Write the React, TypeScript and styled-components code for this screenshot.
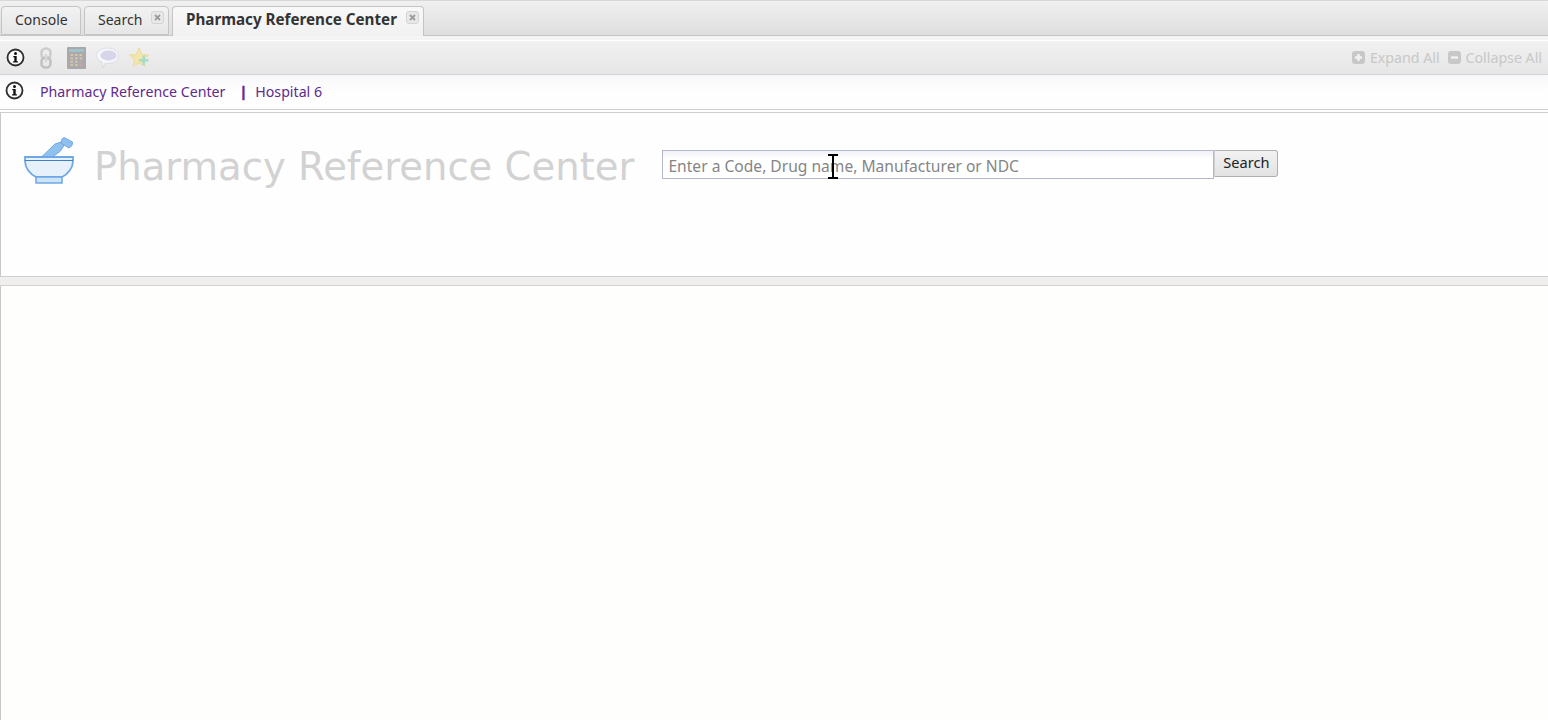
import styled, { createGlobalStyle } from "styled-components";

const GlobalStyle = createGlobalStyle`
  html, body {
    margin: 0;
    padding: 0;
    height: 100%;
    overflow: hidden;
    background: #fefefd;
    font-family: "Noto Sans", "DejaVu Sans", sans-serif;
  }
`;

const Page = styled.div`
  width: 1548px;
  height: 720px;
  display: flex;
  flex-direction: column;
  overflow: hidden;
`;

const TabStrip = styled.div`
  height: 36px;
  box-sizing: border-box;
  padding: 5px 0 0 1px;
  display: flex;
  align-items: flex-end;
  gap: 3px;
  background: linear-gradient(#f0f0f0, #dedede);
  border-top: 1px solid #d8d8d8;
  border-bottom: 1px solid #c6c6c6;
`;

const Tab = styled.div<{ $active?: boolean; $w: number }>`
  position: relative;
  width: ${(p) => p.$w}px;
  height: ${(p) => (p.$active ? 30 : 29)}px;
  box-sizing: border-box;
  padding-left: 13px;
  margin-bottom: ${(p) => (p.$active ? -1 : 0)}px;
  border: 1px solid #c4c4c4;
  border-bottom: ${(p) => (p.$active ? "none" : "1px solid #c4c4c4")};
  border-radius: 4px 4px 0 0;
  background: ${(p) => (p.$active ? "linear-gradient(#f8f8f8, #f1f1f1)" : "linear-gradient(#f2f2f2, #e6e6e6)")};
  color: #333;
  font-size: ${(p) => (p.$active ? 15.2 : 14)}px;
  font-weight: ${(p) => (p.$active ? 700 : 400)};
  line-height: 25px;
  white-space: nowrap;
`;

const TabClose = styled.span`
  position: absolute;
  top: 4px;
  right: 4px;
  width: 13px;
  height: 13px;
  box-sizing: border-box;
  border: 1px solid #d4d4d4;
  border-radius: 3px;
  background: #e8e8e8;
  display: flex;
  align-items: center;
  justify-content: center;
`;

const ToolGap = styled.div`
  height: 4px;
  background: #f4f4f4;
  border-bottom: 1px solid #fff;
`;

const Toolbar = styled.div`
  height: 34px;
  box-sizing: border-box;
  padding: 0 6px;
  display: flex;
  align-items: center;
  background: linear-gradient(#f1f1f1, #e6e6e6);
  border-bottom: 1px solid #d2d2d2;
`;

const ToolIcons = styled.div`
  display: flex;
  align-items: center;
  gap: 10px;
`;

const ExpandGroup = styled.div`
  margin-left: auto;
  display: flex;
  align-items: center;
  gap: 8px;
  color: #c8c8c8;
  font-size: 14.2px;
`;

const ExpandItem = styled.span`
  display: flex;
  align-items: center;
  gap: 5px;
`;

const SquareIcon = styled.span`
  width: 13px;
  height: 13px;
  border-radius: 3px;
  background: #c8c8c8;
  display: flex;
  align-items: center;
  justify-content: center;
`;

const InfoBar = styled.div`
  height: 35px;
  box-sizing: border-box;
  padding: 0 0 2px 5px;
  display: flex;
  align-items: center;
  background: linear-gradient(#f8f8fb, #fefefe 50%);
  border-bottom: 1px solid #cfcfcf;
  color: #5f2a8f;
  font-size: 14.2px;
`;

const InfoIconBox = styled.span`
  display: flex;
  margin-top: -2px;
`;

const Crumb = styled.span`
  margin-left: 16px;
`;

const CrumbSep = styled.span`
  margin-left: 14px;
  margin-right: 8px;
  font-weight: 700;
  -webkit-text-stroke: 0.6px #5f2a8f;
`;

const Gap = styled.div`
  height: 2px;
`;

const Panel = styled.section`
  height: 165px;
  box-sizing: border-box;
  padding: 23px 0 0 22px;
  display: flex;
  align-items: flex-start;
  border-top: 1px solid #cfcfcf;
  border-left: 1px solid #c8c8c8;
  border-bottom: 1px solid #cfcfcf;
  background: #fefefe;
`;

const Title = styled.h1`
  margin: 5px 0 0 19px;
  color: #d2d2d2;
  font-family: "DejaVu Sans", Verdana, sans-serif;
  font-size: 38.6px;
  font-weight: 400;
  line-height: 52px;
  white-space: nowrap;
`;

const SearchForm = styled.div`
  margin: 14px 0 0 28px;
  display: flex;
  align-items: flex-start;
`;

const SearchInput = styled.div`
  position: relative;
  width: 552px;
  height: 29px;
  box-sizing: border-box;
  padding-left: 5px;
  border: 1px solid #b4b8cc;
  background: linear-gradient(#f1f1f6, #fff 30%);
  color: #858585;
  font-size: 15.6px;
  line-height: 30px;
  white-space: nowrap;
`;

const SearchButton = styled.div`
  width: 64px;
  height: 27px;
  box-sizing: border-box;
  border: 1px solid #b0b0b0;
  border-left: 1px solid #cfcfcf;
  border-radius: 0 3px 3px 0;
  background: linear-gradient(#f2f2f2, #e2e2e2);
  color: #222;
  font-size: 14.6px;
  line-height: 22px;
  text-align: center;
`;

const Cursor = styled.svg`
  position: absolute;
  left: 164px;
  top: 3px;
`;

const Divider = styled.div`
  height: 8px;
  background: #f0efed;
  border-bottom: 1px solid #d2d2d2;
`;

const ResultPanel = styled.main`
  flex: 1;
  border-left: 1px solid #c8c8c8;
  background: #fefefd;
`;

function CloseIcon() {
  return (
    <TabClose>
      <svg width="7" height="7" viewBox="0 0 7 7">
        <path d="M1 1l5 5M6 1L1 6" stroke="#9c9c9c" strokeWidth="1.8" />
      </svg>
    </TabClose>
  );
}

function InfoIcon() {
  return (
    <svg width="19" height="19" viewBox="0 0 19 19">
      <circle cx="9.5" cy="9.5" r="8" fill="#fafafa" stroke="#2e2e2e" strokeWidth="1.8" />
      <circle cx="9.5" cy="5.6" r="1.5" fill="#111" />
      <path d="M7.3 8h3.4v5.2h1.2v1.3H7.1v-1.3h1.2V9.3h-1z" fill="#111" />
    </svg>
  );
}

function LinkIcon() {
  return (
    <svg width="22" height="22" viewBox="0 0 22 22" fill="none">
      <rect x="6.5" y="1.5" width="9" height="10" rx="4" stroke="#cdcdcd" strokeWidth="2.6" />
      <rect x="6.5" y="10.5" width="9" height="10" rx="4" stroke="#c2c2c2" strokeWidth="2.6" />
      <path d="M11 7v8" stroke="#d6d6d6" strokeWidth="2.4" />
    </svg>
  );
}

function CalculatorIcon() {
  const keys = [];
  for (let r = 0; r < 4; r++) {
    for (let c = 0; c < 3; c++) {
      keys.push(
        <rect
          key={`${r}-${c}`}
          x={3.5 + c * 4.5}
          y={7 + r * 3.3}
          width="2.6"
          height="2"
          fill={c === 2 && r > 1 ? "#c9a5a5" : "#d5c8a0"}
        />
      );
    }
  }
  return (
    <svg width="19" height="22" viewBox="0 0 19 22">
      <rect width="19" height="22" rx="1" fill="#a9a9ad" />
      <rect x="2" y="2" width="15" height="3" fill="#9fc3c9" />
      {keys}
    </svg>
  );
}

function BubbleIcon() {
  return (
    <svg width="23" height="22" viewBox="0 0 23 22">
      <path
        d="M11.5 1c6 0 11 3.2 11 7.8s-5 7.7-10.500 7.700c-1 0-2 0-2.800-.3L6.500 21l-.4-5.800C2.800 13.800.5 11.500.5 8.800.5 4.200 5.500 1 11.500 1z"
        fill="#f6f6fa"
        stroke="#dcdce4"
      />
      <ellipse cx="12.5" cy="8.5" rx="8" ry="5" fill="#d6d6ea" />
    </svg>
  );
}

function StarAddIcon() {
  return (
    <svg width="23" height="22" viewBox="1 0 23 22">
      <path
        d="M11 1l2.800 6.500 7 .6-5.300 4.600 1.600 6.800-6.100-3.600-6 3.600 1.600-6.800L1.300 8.100l7-.6z"
        fill="#f3e6ac"
        stroke="#ebdca0"
      />
      <path d="M11 12h3.500V8.500H17V12h3.500v2.500H17V18h-2.500v-3.500H11z" fill="#a6dccb" />
    </svg>
  );
}

function MortarIcon() {
  return (
    <svg width="52" height="50" viewBox="0 0 52 50" fill="none">
      <path d="M19 20.500L32 8l6-2 3 3.500-3.500 5.500-7.500 5.500z" fill="#8fc0ee" stroke="#6ea8e4" />
      <path d="M41 1.500L49.500 6 49 9.500 46 12 38 7l1-4z" fill="#8fc0ee" stroke="#6ea8e4" />
      <path
        d="M2 21h48v4c0 7-5 13-11 16H13c-6-3-11-9-11-16z"
        fill="#e6f1fc"
        stroke="#6ea8e4"
        strokeWidth="1.8"
      />
      <path d="M2 24.500h48" stroke="#3f7fc4" />
      <path d="M13 41h26v6H13z" fill="#cfe3f8" stroke="#6ea8e4" strokeWidth="1.5" />
    </svg>
  );
}

export default function App() {
  return (
    <Page>
      <GlobalStyle />
      <TabStrip>
        <Tab $w={80}>Console</Tab>
        <Tab $w={85}>
          Search
          <CloseIcon />
        </Tab>
        <Tab $active $w={252}>
          Pharmacy Reference Center
          <CloseIcon />
        </Tab>
      </TabStrip>
      <ToolGap />
      <Toolbar>
        <ToolIcons>
          <InfoIcon />
          <LinkIcon />
          <CalculatorIcon />
          <BubbleIcon />
          <StarAddIcon />
        </ToolIcons>
        <ExpandGroup>
          <ExpandItem>
            <SquareIcon>
              <svg width="9" height="9" viewBox="0 0 9 9">
                <path d="M3.300 1h2.400v2.300H8v2.400H5.700V8H3.300V5.700H1V3.300h2.300z" fill="#f2f2f2" />
              </svg>
            </SquareIcon>
            Expand All
          </ExpandItem>
          <ExpandItem>
            <SquareIcon>
              <svg width="9" height="9" viewBox="0 0 9 9">
                <path d="M1 3.300h7v2.400H1z" fill="#f2f2f2" />
              </svg>
            </SquareIcon>
            Collapse All
          </ExpandItem>
        </ExpandGroup>
      </Toolbar>
      <InfoBar>
        <InfoIconBox>
          <InfoIcon />
        </InfoIconBox>
        <Crumb>Pharmacy Reference Center</Crumb>
        <CrumbSep>|</CrumbSep>
        Hospital 6
      </InfoBar>
      <Gap />
      <Panel>
        <MortarIcon />
        <Title>Pharmacy Reference Center</Title>
        <SearchForm>
          <SearchInput>
            Enter a Code, Drug name, Manufacturer or NDC
            <Cursor width="12" height="25" viewBox="0 0 12 25">
              <path d="M1 1h10M6 1v23M1 24h10" stroke="#000" strokeWidth="2" fill="none" />
            </Cursor>
          </SearchInput>
          <SearchButton>Search</SearchButton>
        </SearchForm>
      </Panel>
      <Divider />
      <ResultPanel />
    </Page>
  );
}
